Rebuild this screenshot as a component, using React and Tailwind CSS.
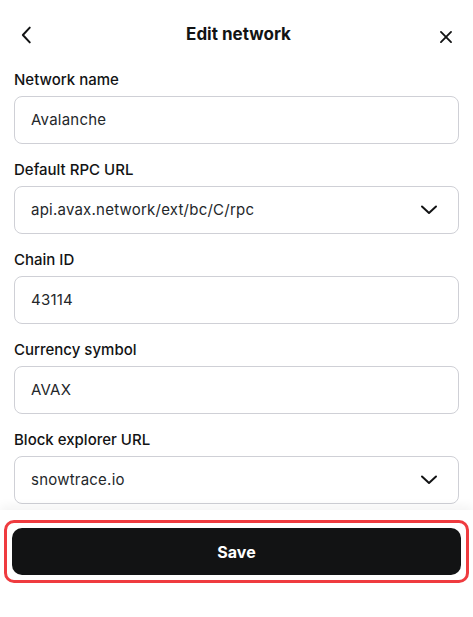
const Field = ({ label, value, select }) => {
    return (
        <div className="flex flex-col gap-[6px]">
            <label className="text-[15px] leading-5 font-medium text-[#121314]">{label}</label>
            <div className="flex items-center justify-between h-[48px] px-4 border border-[#cfd0d6] rounded-lg bg-white">
                <span className="text-[15px] tracking-[0.015em] text-[#24272a]">{value}</span>
                {select && (
                    <svg width="20" height="20" viewBox="0 0 20 20" fill="none" className="mr-[3px]">
                        <path d="M3 6.5l7 6.5 7-6.5" stroke="#121314" strokeWidth="2" strokeLinecap="round" strokeLinejoin="round" />
                    </svg>
                )}
            </div>
        </div>
    );
};

const App = () => {
    return (
        <div className="w-[473px] h-[617px] bg-white flex flex-col font-['Inter',sans-serif] text-[#121314]">
            <div className="flex items-center justify-between h-[60px] px-[16px] pt-[10px]">
                <svg width="22" height="22" viewBox="0 0 24 24" fill="none">
                    <path d="M15 4l-7.5 8 7.5 8" stroke="#121314" strokeWidth="2.2" strokeLinecap="round" strokeLinejoin="round" />
                </svg>
                <h1 className="text-[17px] font-bold ml-[4px]">Edit network</h1>
                <svg width="22" height="22" viewBox="0 0 24 24" fill="none" className="mt-[3px]">
                    <path d="M6.5 6.5l11 11M17.5 6.5l-11 11" stroke="#121314" strokeWidth="2" strokeLinecap="round" />
                </svg>
            </div>
            <div className="flex flex-col gap-[16px] px-[14px] pt-[10px]">
                <Field label="Network name" value="Avalanche" />
                <Field label="Default RPC URL" value="api.avax.network/ext/bc/C/rpc" select />
                <Field label="Chain ID" value="43114" />
                <Field label="Currency symbol" value="AVAX" />
                <Field label="Block explorer URL" value="snowtrace.io" select />
            </div>
            <div className="mt-[6px] flex-1 bg-white shadow-[0_-4px_10px_rgba(0,0,0,0.05)] pt-[10px] px-[4px]">
                <div className="border-[3px] border-[#ef3b3f] rounded-[10px] p-[5px]">
                    <button className="w-full h-[47px] bg-[#121314] text-white text-[16px] font-bold rounded-[10px]">
                        Save
                    </button>
                </div>
            </div>
        </div>
    );
};

export default App;
